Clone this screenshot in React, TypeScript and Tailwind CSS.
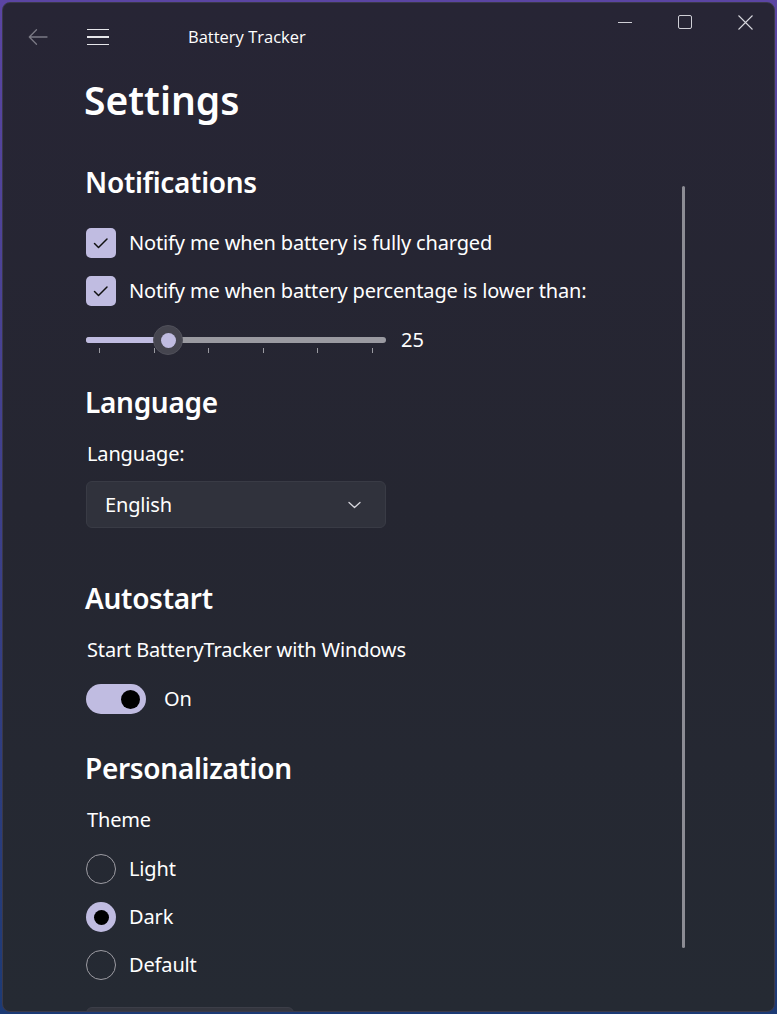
import { useState } from 'react'

const font = { fontFamily: '"Noto Sans", "Open Sans", sans-serif' }

function CheckRow({ label }: { label: string }) {
  return (
    <div className="flex items-center h-[48px]">
      <div className="w-[30px] h-[30px] rounded-[5px] bg-[#c0bce1] flex items-center justify-center">
        <svg width="16" height="16" viewBox="0 0 16 16" fill="none">
          <path d="M1.5 8.5 L5.5 12.5 L14 4" stroke="#111" strokeWidth="1.5" strokeLinecap="round" strokeLinejoin="round" />
        </svg>
      </div>
      <span className="ml-[13px] text-[20px] tracking-[-0.15px] text-white">{label}</span>
    </div>
  )
}

function Radio({ label, checked }: { label: string; checked?: boolean }) {
  return (
    <div className="flex items-center h-[48px]">
      {checked ? (
        <div className="w-[30px] h-[30px] rounded-full bg-[#c0bce1] flex items-center justify-center">
          <div className="w-[15px] h-[15px] rounded-full bg-black" />
        </div>
      ) : (
        <div className="w-[30px] h-[30px] rounded-full border-[1.5px] border-[#9d9ca3]" />
      )}
      <span className="ml-[13px] text-[20px] tracking-[-0.15px] text-white">{label}</span>
    </div>
  )
}

function Heading({ children, className }: { children: string; className?: string }) {
  return (
    <h2 className={`h-[40px] leading-[40px] text-[28px] tracking-[-0.3px] font-semibold text-white -ml-[1px] ${className ?? ''}`}>
      {children}
    </h2>
  )
}

function Label({ children, className }: { children: string; className?: string }) {
  return <div className={`h-[30px] leading-[30px] text-[20px] tracking-[-0.15px] ml-[1px] ${className ?? ''}`}>{children}</div>
}

export default function App() {
  const [value] = useState(25)
  const ticks = [13, 68, 122, 177, 231, 286]

  return (
    <div className="w-[777px] h-[1014px] p-[2px] bg-gradient-to-b from-[#5b45a3] to-[#1c3a74]" style={font}>
      <div className="relative w-full h-full rounded-[8px] overflow-hidden border border-[#3b3949] bg-gradient-to-b from-[#272535] via-[#252631] to-[#252a33]">
        {/* title bar */}
        <div className="flex items-start h-[70px]">
          <div className="flex items-center h-[68px]">
            <div className="w-[70px] flex justify-center">
              <svg width="22" height="22" viewBox="0 0 22 22" fill="none">
                <path d="M20 11 H2.5 M9.5 3.8 L2.3 11 L9.5 18.2" stroke="#7b7a85" strokeWidth="1.3" strokeLinecap="round" strokeLinejoin="round" />
              </svg>
            </div>
            <div className="w-[24px] ml-[14px] flex flex-col gap-[6px]">
              <div className="h-[1.5px] w-[22px] bg-[#e6e6ea]" />
              <div className="h-[1.5px] w-[22px] bg-[#e6e6ea]" />
              <div className="h-[1.5px] w-[22px] bg-[#e6e6ea]" />
            </div>
            <span className="ml-[77px] text-[16.5px] text-white" style={{ fontFamily: '"Open Sans", sans-serif' }}>Battery Tracker</span>
          </div>
          <div className="ml-auto flex mr-[-1px]">
            <div className="w-[60px] h-[38px] flex items-center justify-center">
              <div className="w-[14px] h-[1px] bg-[#cfcfd6]" />
            </div>
            <div className="w-[60px] h-[38px] flex items-center justify-center">
              <div className="w-[14px] h-[14px] rounded-[2px] border border-[#cfcfd6]" />
            </div>
            <div className="w-[60px] h-[38px] flex items-center justify-center">
              <svg width="15" height="15" viewBox="0 0 15 15">
                <path d="M0.5 0.5 L14.5 14.5 M14.5 0.5 L0.5 14.5" stroke="#d6d6dc" strokeWidth="1.1" />
              </svg>
            </div>
          </div>
        </div>

        {/* content */}
        <div className="pl-[83px] text-white">
          <h1 className="h-[52px] leading-[52px] text-[39px] font-semibold mt-[1px] -ml-[2px]">Settings</h1>

          <Heading className="mt-[36px]">Notifications</Heading>
          <div className="mt-[17px]">
            <CheckRow label="Notify me when battery is fully charged" />
            <CheckRow label="Notify me when battery percentage is lower than:" />
          </div>

          <div className="flex items-center h-[48px] mt-[1px]">
            <div className="relative w-[300px] h-[30px]">
              <div className="absolute left-0 right-0 top-[12px] h-[6px] rounded-full bg-[#9a9aa1]" />
              <div className="absolute left-0 top-[12px] h-[6px] rounded-full bg-[#c0bce1]" style={{ width: `${(value / 100) * 300 + 6}px` }} />
              {ticks.map((t) => (
                <div key={t} className="absolute top-[23px] w-[1px] h-[5px] bg-[#9a9aa1]" style={{ left: `${t}px` }} />
              ))}
              <div className="absolute top-0 left-[67px] w-[30px] h-[30px] rounded-full bg-[#45454f] border border-[#50505a] flex items-center justify-center">
                <div className="w-[15px] h-[15px] rounded-full bg-[#c0bce1]" />
              </div>
            </div>
            <span className="ml-[15px] text-[20px]">{value}</span>
          </div>

          <Heading className="mt-[18px]">Language</Heading>
          <Label className="mt-[17px]">Language:</Label>
          <div className="mt-[12px] w-[300px] h-[47px] rounded-[6px] bg-[#30323c] border border-[#393b45] flex items-center pl-[18px]">
            <span className="text-[20px] tracking-[-0.15px]">English</span>
            <svg className="ml-auto mr-[24px]" width="13" height="8" viewBox="0 0 13 8" fill="none">
              <path d="M1 1.5 L6.5 6.5 L12 1.5" stroke="#d8d8de" strokeWidth="1.3" strokeLinecap="round" strokeLinejoin="round" />
            </svg>
          </div>

          <Heading className="mt-[50px]">Autostart</Heading>
          <Label className="mt-[17px]">Start BatteryTracker with Windows</Label>
          <div className="mt-[19px] flex items-center h-[30px]">
            <div className="w-[60px] h-[30px] rounded-full bg-[#c0bce1] flex items-center justify-end pr-[6px]">
              <div className="w-[19px] h-[19px] rounded-full bg-black" />
            </div>
            <span className="ml-[18px] text-[20px]">On</span>
          </div>

          <Heading className="mt-[34px]">Personalization</Heading>
          <Label className="mt-[17px]">Theme</Label>
          <div className="mt-[10px]">
            <Radio label="Light" />
            <Radio label="Dark" checked />
            <Radio label="Default" />
          </div>
          <div className="mt-[18px] w-[208px] h-[40px] rounded-[6px] bg-[#34363f] border border-[#3c3e48]" />
        </div>

        {/* scrollbar */}
        <div className="absolute left-[679px] top-[183px] w-[3px] h-[762px] rounded-full bg-[#8c8c94]" />
      </div>
    </div>
  )
}
